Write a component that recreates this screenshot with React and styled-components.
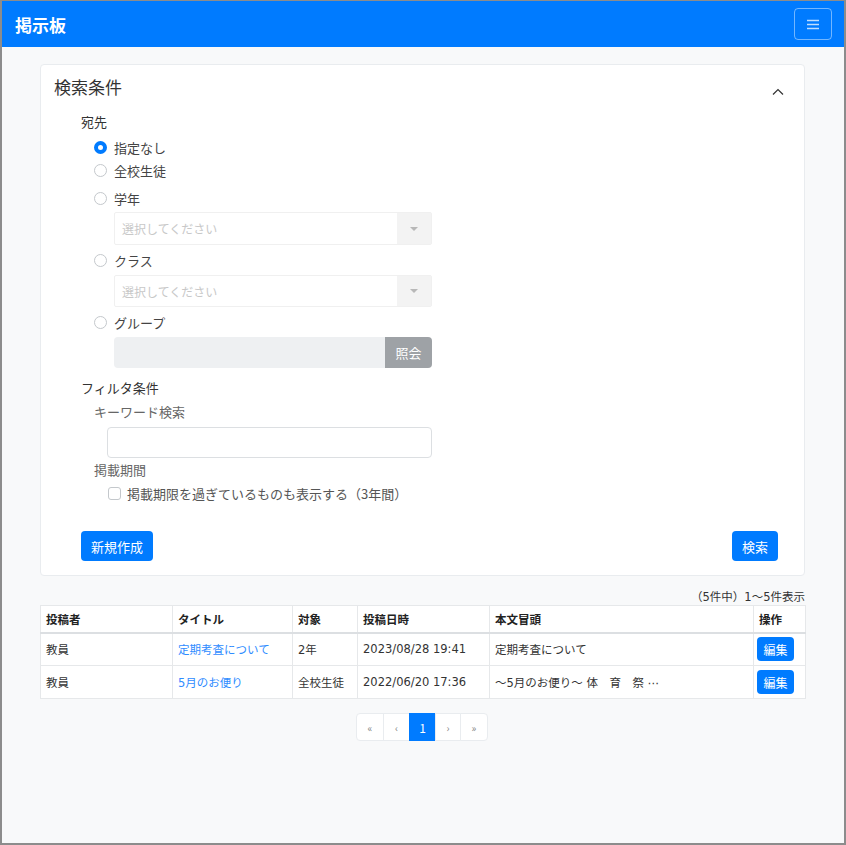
import React from 'react';
import styled, { createGlobalStyle } from 'styled-components';

const GlobalStyle = createGlobalStyle`
  html, body {
    margin: 0;
    padding: 0;
    background: #f8f9fa;
  }
  * {
    box-sizing: border-box;
  }
  body {
    font-family: "Noto Sans CJK JP", "Liberation Sans", sans-serif;
    color: #333;
  }
`;

const Frame = styled.div`
  min-height: 100vh;
  border: 2px solid #8c8c8c;
  border-top-width: 1px;
  background: #f8f9fa;
  display: flex;
  flex-direction: column;
`;

const Navbar = styled.nav`
  height: 46px;
  background: #007bff;
  display: flex;
  align-items: center;
  justify-content: space-between;
  padding: 0 12px 0 13px;
`;

const Brand = styled.div`
  color: #fff;
  font-size: 17px;
  font-weight: 700;
`;

const Toggler = styled.button`
  width: 38px;
  height: 32px;
  border: 1px solid rgba(255, 255, 255, 0.45);
  border-radius: 4px;
  background: transparent;
  display: flex;
  align-items: center;
  justify-content: center;
  padding: 0;
`;

const Main = styled.main`
  padding: 17px 39px 0 38px;
`;

const Card = styled.section`
  background: #fff;
  border: 1px solid #e9ecef;
  border-radius: 4px;
`;

const CardHeader = styled.div`
  height: 46px;
  display: flex;
  justify-content: space-between;
  align-items: flex-start;
  padding: 10px 20px 0 13px;
`;

const CardTitle = styled.h2`
  margin: 0;
  font-size: 17px;
  font-weight: 400;
  line-height: 24px;
  color: #333;
`;

const Chevron = styled.span`
  margin-top: 13px;
  display: flex;
`;

const CardBody = styled.div`
  padding: 0 26px 14px 40px;
`;

const Label = styled.div`
  font-size: 13px;
  line-height: 20px;
  margin-top: ${p => p.$mt || 0}px;
  margin-left: ${p => p.$ml || 0}px;
  color: ${p => p.$muted ? '#666' : '#333'};
`;

const RadioRow = styled.label`
  display: flex;
  align-items: center;
  gap: 7px;
  height: 20px;
  margin-top: ${p => p.$mt || 0}px;
  margin-left: 13px;
  font-size: 13px;
  color: #444;
`;

const RadioDot = styled.span`
  width: 13px;
  height: 13px;
  border-radius: 50%;
  border: ${p => p.$checked ? '4px solid #007bff' : '1px solid #c4c8cc'};
  background: #fff;
  flex: none;
`;

const Indented = styled.div`
  margin-left: 33px;
  width: 318px;
  margin-top: ${p => p.$mt || 0}px;
`;

const SelectBox = styled.div`
  height: ${p => p.$h}px;
  display: flex;
  border: 1px solid #f0f0f0;
  border-radius: 2px;
  background: #fff;
`;

const SelectText = styled.div`
  flex: 1;
  font-size: 12px;
  color: #c8c8c8;
  display: flex;
  align-items: center;
  padding-left: 7px;
`;

const SelectArrow = styled.div`
  width: 34px;
  background: #f3f3f3;
  display: flex;
  align-items: center;
  justify-content: center;
  &::after {
    content: '';
    border-left: 4px solid transparent;
    border-right: 4px solid transparent;
    border-top: 4px solid #b8b8b8;
  }
`;

const InputGroup = styled.div`
  height: 31px;
  display: flex;
`;

const DisabledInput = styled.div`
  flex: 1;
  background: #eef0f2;
  border-radius: 4px 0 0 4px;
`;

const AppendButton = styled.button`
  width: 47px;
  border: none;
  border-radius: 0 4px 4px 0;
  background: #9ea2a6;
  color: #fff;
  font-family: inherit;
  font-size: 13px;
  padding: 0;
`;

const TextInput = styled.input`
  display: block;
  width: 325px;
  height: 31px;
  margin: 5px 0 0 26px;
  border: 1px solid #dcdfe2;
  border-radius: 4px;
  background: #fff;
`;

const CheckRow = styled.label`
  display: flex;
  align-items: center;
  gap: 6px;
  height: 20px;
  margin: 3px 0 0 27px;
  font-size: 13px;
  color: #555;
`;

const CheckBox = styled.span`
  width: 13px;
  height: 13px;
  border: 1px solid #c4c8cc;
  border-radius: 3px;
  background: #fff;
  flex: none;
`;

const ButtonBar = styled.div`
  display: flex;
  justify-content: space-between;
  margin-top: 28px;
`;

const PrimaryButton = styled.button`
  height: 30px;
  padding: 0 10px;
  border: none;
  border-radius: 4px;
  background: #007bff;
  color: #fff;
  font-family: inherit;
  font-size: 13px;
`;

const EditButton = styled(PrimaryButton)`
  width: 37px;
  height: 24px;
  padding: 0;
  font-size: 12px;
`;

const ResultInfo = styled.div`
  text-align: right;
  line-height: 16px;
  margin-top: 13px;
  color: #333;
  font-family: "DejaVu Sans", "Noto Sans CJK JP", sans-serif;
  font-size: 11.5px;
`;

const Table = styled.table`
  width: 100%;
  border-collapse: collapse;
  table-layout: fixed;
  background: #fff;
  font-family: "DejaVu Sans", "Noto Sans CJK JP", sans-serif;
  font-size: 11.5px;
`;

const Th = styled.th`
  height: 27px;
  text-align: left;
  font-weight: 700;
  padding: 0 5px;
  border: 1px solid #e6e8ea;
  border-bottom: 2px solid #dcdfe2;
  color: #222;
`;

const Td = styled.td`
  height: 33px;
  padding: 0 ${p => p.$tight ? 3 : 5}px;
  border: 1px solid #e6e8ea;
  color: #333;
  white-space: nowrap;
  overflow: hidden;
`;

const Link = styled.a`
  color: #2f8cff;
  text-decoration: none;
`;

const Pagination = styled.ul`
  list-style: none;
  display: flex;
  justify-content: center;
  margin: 14px 0 0;
  padding: 0;
`;

const PageItem = styled.li`
  width: ${p => p.$w}px;
  height: 28px;
  display: flex;
  align-items: center;
  justify-content: center;
  font-size: ${p => p.$active ? 12 : 10}px;
  background: ${p => p.$active ? '#007bff' : '#fff'};
  color: ${p => p.$active ? '#fff' : '#888'};
  border: 1px solid ${p => p.$active ? '#007bff' : '#e9ecef'};
  margin-left: -1px;
  &:first-child {
    border-radius: 4px 0 0 4px;
  }
  &:last-child {
    border-radius: 0 4px 4px 0;
  }
`;

const rows = [
  { author: '教員', title: '定期考査について', target: '2年', date: '2023/08/28 19:41', body: '定期考査について' },
  { author: '教員', title: '5月のお便り', target: '全校生徒', date: '2022/06/20 17:36', body: '～5月のお便り～ 体　育　祭 ⋯' },
];

const pages = [
  { label: '«', w: 28 },
  { label: '‹', w: 27 },
  { label: '1', w: 27, active: true },
  { label: '›', w: 26 },
  { label: '»', w: 28 },
];

function SelectField({ h }) {
  return (
    <SelectBox $h={h}>
      <SelectText>選択してください</SelectText>
      <SelectArrow />
    </SelectBox>
  );
}

export default function App() {
  return (
    <>
      <GlobalStyle />
      <Frame>
        <Navbar>
          <Brand>掲示板</Brand>
          <Toggler aria-label="menu">
            <svg width="12" height="11" viewBox="0 0 12 11">
              <path d="M0 1.5h12M0 5.5h12M0 9.5h12" stroke="rgba(255,255,255,0.75)" strokeWidth="1.6" />
            </svg>
          </Toggler>
        </Navbar>

        <Main>
          <Card>
            <CardHeader>
              <CardTitle>検索条件</CardTitle>
              <Chevron>
                <svg width="12" height="7" viewBox="0 0 12 7">
                  <path d="M1 6.5L6 1.5l5 5" fill="none" stroke="#333" strokeWidth="1.2" />
                </svg>
              </Chevron>
            </CardHeader>
            <CardBody>
              <Label $mt={1}>宛先</Label>
              <RadioRow $mt={5}><RadioDot $checked />指定なし</RadioRow>
              <RadioRow $mt={3}><RadioDot />全校生徒</RadioRow>
              <RadioRow $mt={8}><RadioDot />学年</RadioRow>
              <Indented $mt={4}><SelectField h={33} /></Indented>
              <RadioRow $mt={5}><RadioDot />クラス</RadioRow>
              <Indented $mt={5}><SelectField h={32} /></Indented>
              <RadioRow $mt={5}><RadioDot />グループ</RadioRow>
              <Indented $mt={5}>
                <InputGroup>
                  <DisabledInput />
                  <AppendButton>照会</AppendButton>
                </InputGroup>
              </Indented>

              <Label $mt={10}>フィルタ条件</Label>
              <Label $mt={4} $ml={13} $muted>キーワード検索</Label>
              <TextInput type="text" />
              <Label $mt={2} $ml={13} $muted>掲載期間</Label>
              <CheckRow><CheckBox />掲載期限を過ぎているものも表示する（3年間）</CheckRow>

              <ButtonBar>
                <PrimaryButton>新規作成</PrimaryButton>
                <PrimaryButton>検索</PrimaryButton>
              </ButtonBar>
            </CardBody>
          </Card>

          <ResultInfo>（5件中）1～5件表示</ResultInfo>
          <Table>
            <colgroup>
              <col style={{ width: 132 }} />
              <col style={{ width: 120 }} />
              <col style={{ width: 65 }} />
              <col style={{ width: 132 }} />
              <col style={{ width: 264 }} />
              <col style={{ width: 52 }} />
            </colgroup>
            <thead>
              <tr>
                <Th>投稿者</Th>
                <Th>タイトル</Th>
                <Th>対象</Th>
                <Th>投稿日時</Th>
                <Th>本文冒頭</Th>
                <Th>操作</Th>
              </tr>
            </thead>
            <tbody>
              {rows.map(r => (
                <tr key={r.title}>
                  <Td>{r.author}</Td>
                  <Td><Link href="#">{r.title}</Link></Td>
                  <Td>{r.target}</Td>
                  <Td>{r.date}</Td>
                  <Td>{r.body}</Td>
                  <Td $tight><EditButton>編集</EditButton></Td>
                </tr>
              ))}
            </tbody>
          </Table>

          <Pagination>
            {pages.map(p => (
              <PageItem key={p.label} $w={p.w} $active={p.active}>{p.label}</PageItem>
            ))}
          </Pagination>
        </Main>
      </Frame>
    </>
  );
}
